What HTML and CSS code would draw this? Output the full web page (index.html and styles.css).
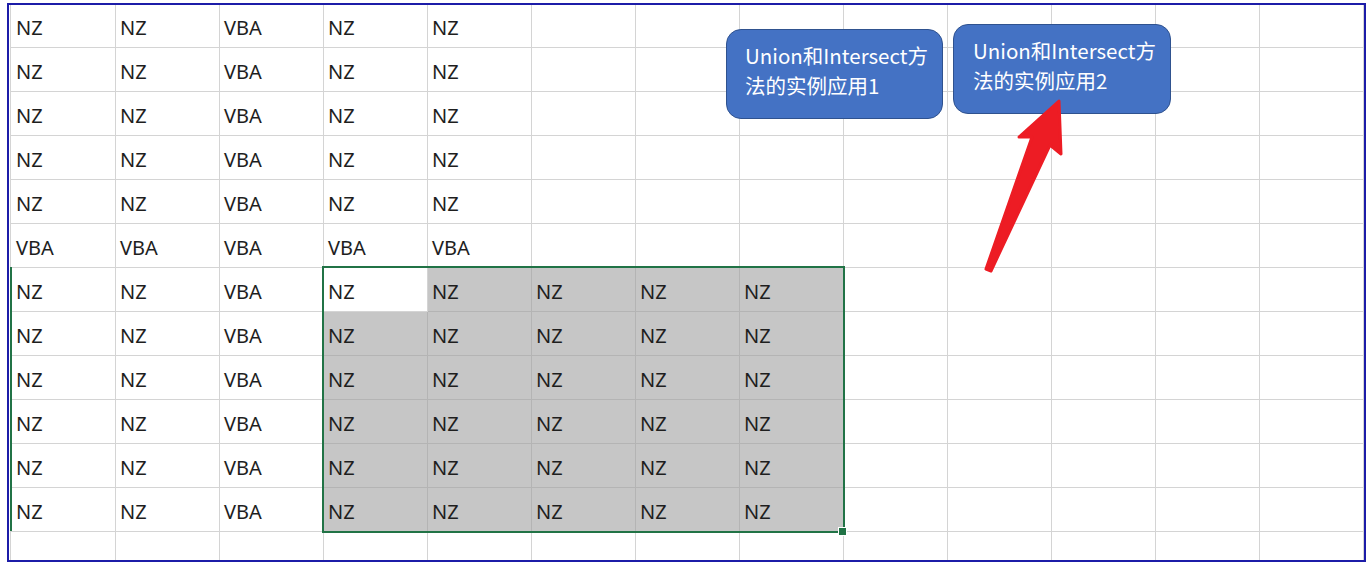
FILE: index.html
```html
<!DOCTYPE html>
<html>
<head>
<meta charset="utf-8">
<link rel="stylesheet" href="styles.css">
</head>
<body>
<div class="frame">
  <div class="sheet">
    <div class="row first"><div class="c">NZ</div><div class="c">NZ</div><div class="c">VBA</div><div class="c">NZ</div><div class="c">NZ</div><div class="c"></div><div class="c"></div><div class="c"></div><div class="c"></div><div class="c"></div><div class="c"></div><div class="c"></div><div class="c"></div></div>
    <div class="row"><div class="c">NZ</div><div class="c">NZ</div><div class="c">VBA</div><div class="c">NZ</div><div class="c">NZ</div><div class="c"></div><div class="c"></div><div class="c"></div><div class="c"></div><div class="c"></div><div class="c"></div><div class="c"></div><div class="c"></div></div>
    <div class="row"><div class="c">NZ</div><div class="c">NZ</div><div class="c">VBA</div><div class="c">NZ</div><div class="c">NZ</div><div class="c"></div><div class="c"></div><div class="c"></div><div class="c"></div><div class="c"></div><div class="c"></div><div class="c"></div><div class="c"></div></div>
    <div class="row"><div class="c">NZ</div><div class="c">NZ</div><div class="c">VBA</div><div class="c">NZ</div><div class="c">NZ</div><div class="c"></div><div class="c"></div><div class="c"></div><div class="c"></div><div class="c"></div><div class="c"></div><div class="c"></div><div class="c"></div></div>
    <div class="row"><div class="c">NZ</div><div class="c">NZ</div><div class="c">VBA</div><div class="c">NZ</div><div class="c">NZ</div><div class="c"></div><div class="c"></div><div class="c"></div><div class="c"></div><div class="c"></div><div class="c"></div><div class="c"></div><div class="c"></div></div>
    <div class="row"><div class="c">VBA</div><div class="c">VBA</div><div class="c">VBA</div><div class="c">VBA</div><div class="c">VBA</div><div class="c"></div><div class="c"></div><div class="c"></div><div class="c"></div><div class="c"></div><div class="c"></div><div class="c"></div><div class="c"></div></div>
    <div class="row"><div class="c">NZ</div><div class="c">NZ</div><div class="c">VBA</div><div class="c">NZ</div><div class="c s">NZ</div><div class="c s">NZ</div><div class="c s">NZ</div><div class="c s">NZ</div><div class="c"></div><div class="c"></div><div class="c"></div><div class="c"></div><div class="c"></div></div>
    <div class="row"><div class="c">NZ</div><div class="c">NZ</div><div class="c">VBA</div><div class="c s">NZ</div><div class="c s">NZ</div><div class="c s">NZ</div><div class="c s">NZ</div><div class="c s">NZ</div><div class="c"></div><div class="c"></div><div class="c"></div><div class="c"></div><div class="c"></div></div>
    <div class="row"><div class="c">NZ</div><div class="c">NZ</div><div class="c">VBA</div><div class="c s">NZ</div><div class="c s">NZ</div><div class="c s">NZ</div><div class="c s">NZ</div><div class="c s">NZ</div><div class="c"></div><div class="c"></div><div class="c"></div><div class="c"></div><div class="c"></div></div>
    <div class="row"><div class="c">NZ</div><div class="c">NZ</div><div class="c">VBA</div><div class="c s">NZ</div><div class="c s">NZ</div><div class="c s">NZ</div><div class="c s">NZ</div><div class="c s">NZ</div><div class="c"></div><div class="c"></div><div class="c"></div><div class="c"></div><div class="c"></div></div>
    <div class="row"><div class="c">NZ</div><div class="c">NZ</div><div class="c">VBA</div><div class="c s">NZ</div><div class="c s">NZ</div><div class="c s">NZ</div><div class="c s">NZ</div><div class="c s">NZ</div><div class="c"></div><div class="c"></div><div class="c"></div><div class="c"></div><div class="c"></div></div>
    <div class="row"><div class="c">NZ</div><div class="c">NZ</div><div class="c">VBA</div><div class="c s">NZ</div><div class="c s">NZ</div><div class="c s">NZ</div><div class="c s">NZ</div><div class="c s">NZ</div><div class="c"></div><div class="c"></div><div class="c"></div><div class="c"></div><div class="c"></div></div>
    <div class="row last"><div class="c"></div><div class="c"></div><div class="c"></div><div class="c"></div><div class="c"></div><div class="c"></div><div class="c"></div><div class="c"></div><div class="c"></div><div class="c"></div><div class="c"></div><div class="c"></div><div class="c"></div></div>
  </div>
</div>
<div class="rowmark"></div>
<div class="selection"></div>
<div class="handle"></div>
<div class="shape s1">Union和Intersect方<br>法的实例应用1</div>
<div class="shape s2">Union和Intersect方<br>法的实例应用2</div>
<svg class="arrow" width="1370" height="568" viewBox="0 0 1370 568">
  <polygon points="1059,101 1061,154 1050,145 991,271 986,269 1032,137 1019,137" fill="#ed1c24" stroke="#ed1c24" stroke-width="3" stroke-linejoin="round"/>
</svg>
</body>
</html>
```

FILE: styles.css
```css
html, body {
  margin: 0;
  padding: 0;
}
body {
  position: relative;
  width: 1370px;
  height: 568px;
  overflow: hidden;
  background: #ffffff;
  font-family: "Noto Sans", "Liberation Sans", Arial, sans-serif;
}
.frame {
  margin: 3px 0 0 7px;
  width: 1355px;
  height: 555px;
  border: 2px solid #1c1ca8;
  overflow: hidden;
}
.sheet {
  margin-left: 1px;
  border-left: 1px solid #d4d4d4;
}
.row {
  display: flex;
  height: 44px;
}
.row.first {
  height: 43px;
}
.row.last {
  height: 28px;
}
.c {
  box-sizing: border-box;
  flex: none;
  width: 104px;
  height: 100%;
  border-right: 1px solid #d4d4d4;
  border-bottom: 1px solid #d4d4d4;
  display: flex;
  align-items: flex-end;
  padding: 0 0 8px 4px;
  font-size: 20px;
  line-height: 23px;
  color: #1e1e1e;
}
.c:first-child {
  width: 105px;
  padding-left: 5px;
}
.row.last .c {
  border-bottom: none;
}
.c.s {
  background: #c6c6c6;
  border-right-color: #b4b4b4;
  border-bottom-color: #b4b4b4;
}
.rowmark {
  position: absolute;
  left: 10px;
  top: 267px;
  width: 2px;
  height: 264px;
  background: #217346;
}
.selection {
  position: absolute;
  left: 322px;
  top: 266px;
  width: 523px;
  height: 267px;
  box-sizing: border-box;
  border: 2px solid #217346;
}
.handle {
  position: absolute;
  left: 838px;
  top: 527px;
  width: 7px;
  height: 7px;
  background: #217346;
  border: 1px solid #ffffff;
}
.shape {
  position: absolute;
  box-sizing: border-box;
  background: #4472c4;
  border: 1.5px solid #2f528f;
  border-radius: 15px;
  color: #ffffff;
  font-family: "Noto Sans CJK SC", "Noto Sans", sans-serif;
  font-size: 20.5px;
  line-height: 30px;
  white-space: nowrap;
}
.s1 {
  left: 726px;
  top: 29px;
  width: 217px;
  height: 90px;
  padding: 10px 0 0 18px;
}
.s2 {
  left: 953px;
  top: 24px;
  width: 218px;
  height: 90px;
  padding: 10px 0 0 19px;
}
.arrow {
  position: absolute;
  left: 0;
  top: 0;
  pointer-events: none;
}
```
